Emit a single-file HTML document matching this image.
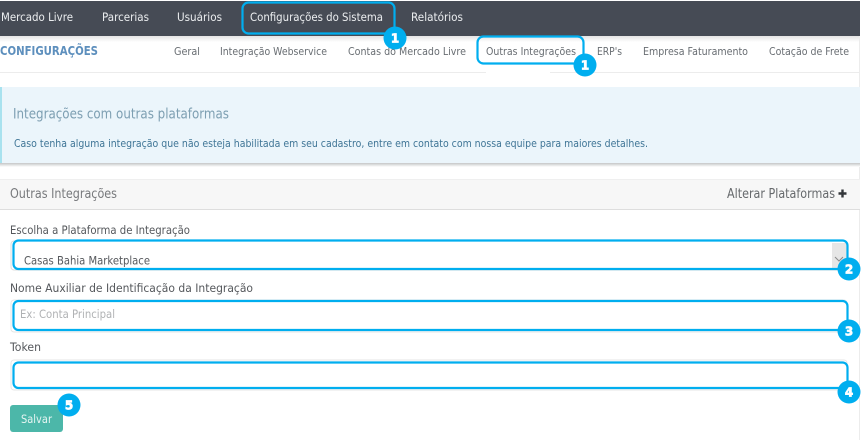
<!DOCTYPE html>
<html lang="pt-BR">
<head>
<meta charset="utf-8">
<title>Outras Integrações</title>
<style>
html,body{margin:0;padding:0;background:#fff;width:863px;height:440px;overflow:hidden}
svg{display:block;position:absolute;left:0;top:0;filter:blur(.3px)}
text{font-family:"DejaVu Sans","Liberation Sans",sans-serif;font-size:10px}
.hl{fill:none;stroke:#00aeef;stroke-width:2.2}
.bc{fill:#00aeef}
.bt{fill:#fff;stroke:#fff;stroke-width:.7;font-family:"DejaVu Sans",sans-serif;font-weight:700;font-size:12px;text-anchor:middle}
.n{font-size:11.5px}
.s{font-size:10.8px}
.f{font-size:11.5px}
</style>
</head>
<body>
<svg width="863" height="440" viewBox="0 0 863 440" xmlns="http://www.w3.org/2000/svg">
<defs>
<linearGradient id="ns" x1="0" y1="0" x2="0" y2="1"><stop offset="0" stop-color="#e4e4e4"/><stop offset="1" stop-color="#fff"/></linearGradient>
<linearGradient id="as" x1="0" y1="0" x2="0" y2="1"><stop offset="0" stop-color="#c4c6c7"/><stop offset="1" stop-color="#fff"/></linearGradient>
</defs>

<!-- top nav -->
<rect x="0" y="1" width="860" height="35" fill="#464b55"/>
<rect x="0" y="36" width="860" height="6" fill="url(#ns)"/>
<rect x="859" y="36" width="1" height="404" fill="#ececec"/>
<g fill="#eceef0">
<text class="n" x="1" y="21" textLength="72" lengthAdjust="spacingAndGlyphs">Mercado Livre</text>
<text class="n" x="102" y="21" textLength="47" lengthAdjust="spacingAndGlyphs">Parcerias</text>
<text class="n" x="177" y="21" textLength="45" lengthAdjust="spacingAndGlyphs">Usuários</text>
<text class="n" x="250" y="21" textLength="133" lengthAdjust="spacingAndGlyphs">Configurações do Sistema</text>
<text class="n" x="411" y="21" textLength="52" lengthAdjust="spacingAndGlyphs">Relatórios</text>
</g>

<!-- sub nav -->
<text x="0" y="55" textLength="98" lengthAdjust="spacingAndGlyphs" fill="#5d8fbd" style="font-weight:700;font-size:12px">CONFIGURAÇÕES</text>
<g fill="#686d72">
<text class="s" x="174" y="55" textLength="26" lengthAdjust="spacingAndGlyphs">Geral</text>
<text class="s" x="220" y="55" textLength="107" lengthAdjust="spacingAndGlyphs">Integração Webservice</text>
<text class="s" x="348" y="55" textLength="118" lengthAdjust="spacingAndGlyphs">Contas do Mercado Livre</text>
<text class="s" x="486" y="55" textLength="90" lengthAdjust="spacingAndGlyphs">Outras Integrações</text>
<text class="s" x="597" y="55" textLength="25" lengthAdjust="spacingAndGlyphs">ERP's</text>
<text class="s" x="643" y="55" textLength="105" lengthAdjust="spacingAndGlyphs">Empresa Faturamento</text>
<text class="s" x="769" y="55" textLength="80" lengthAdjust="spacingAndGlyphs">Cotação de Frete</text>
</g>
<rect x="0" y="72" width="486" height="1" fill="#ececec"/>
<rect x="486" y="72" width="64" height="1" fill="#fff"/>
<rect x="550" y="72" width="310" height="1" fill="#ececec"/>

<!-- alert -->
<rect x="0" y="163" width="860" height="4" fill="url(#as)"/>
<rect x="0" y="87" width="860" height="76" fill="#ebf5fb"/>
<rect x="0" y="87" width="2" height="76" fill="#a8e2ef"/>
<text x="13" y="118.5" textLength="216" lengthAdjust="spacingAndGlyphs" fill="#7d9fb2" style="font-size:14.5px">Integrações com outras plataformas</text>
<text x="14" y="147" textLength="634" lengthAdjust="spacingAndGlyphs" fill="#3f7596" style="font-size:11px">Caso tenha alguma integração que não esteja habilitada em seu cadastro, entre em contato com nossa equipe para maiores detalhes.</text>

<!-- panel -->
<rect x="0" y="179" width="860" height="30" fill="#f7f7f7"/>
<rect x="0" y="179" width="860" height="1" fill="#efefef"/>
<rect x="0" y="209" width="860" height="1" fill="#dedede"/>
<text x="10" y="198" textLength="107" lengthAdjust="spacingAndGlyphs" fill="#77797c" style="font-size:13px">Outras Integrações</text>
<text x="727" y="198" textLength="108" lengthAdjust="spacingAndGlyphs" fill="#66696c" style="font-size:13px">Alterar Plataformas</text>
<path d="M838.5 193.5h8M842.5 189.5v8" stroke="#33363a" stroke-width="2.4" fill="none"/>

<!-- form -->
<g fill="#55585c">
<text class="f" x="10" y="234" textLength="180" lengthAdjust="spacingAndGlyphs">Escolha a Plataforma de Integração</text>
<text class="f" x="10" y="292" textLength="243" lengthAdjust="spacingAndGlyphs">Nome Auxiliar de Identificação da Integração</text>
<text class="f" x="10" y="351" textLength="31" lengthAdjust="spacingAndGlyphs">Token</text>
</g>

<!-- select -->
<rect x="11" y="241" width="836" height="29" rx="3" fill="#fff" stroke="#dcdcdc"/>
<rect x="832" y="243" width="15" height="26" fill="#e6e6e6"/>
<path d="M835 257l4 4 4-4" fill="none" stroke="#8b8b8b" stroke-width="1"/>
<text class="f" x="24" y="264.5" textLength="126" lengthAdjust="spacingAndGlyphs" fill="#55585c">Casas Bahia Marketplace</text>

<!-- input nome -->
<rect x="11" y="300" width="836" height="32" rx="3" fill="#fff" stroke="#e6e6e6"/>
<text class="f" x="20" y="318" textLength="95" lengthAdjust="spacingAndGlyphs" fill="#b0b2b4">Ex: Conta Principal</text>

<!-- input token -->
<rect x="11" y="360" width="836" height="30" rx="3" fill="#fff" stroke="#e6e6e6"/>

<!-- button -->
<rect x="10" y="405" width="53" height="27" rx="3" fill="#4cb7a9"/>
<text class="f" x="21" y="423" textLength="31" lengthAdjust="spacingAndGlyphs" fill="#e6f5f2">Salvar</text>

<!-- highlights -->
<rect class="hl" x="242.5" y="2.5" width="152" height="31" rx="6"/>
<rect class="hl" x="477.5" y="36.5" width="106" height="27" rx="6"/>
<rect class="hl" x="13.5" y="240.5" width="834" height="28.5" rx="5"/>
<rect class="hl" x="13.5" y="301" width="834" height="29" rx="5"/>
<rect class="hl" x="13.5" y="362.5" width="834" height="25.5" rx="5"/>

<!-- badges -->
<circle class="bc" cx="395" cy="38" r="11.5"/><text class="bt" x="395" y="42.5">1</text>
<circle class="bc" cx="585" cy="65" r="11.5"/><text class="bt" x="585" y="69.5">1</text>
<circle class="bc" cx="849" cy="269" r="11.5"/><text class="bt" x="849" y="273.5">2</text>
<circle class="bc" cx="849" cy="331" r="11.5"/><text class="bt" x="849" y="335.5">3</text>
<circle class="bc" cx="849" cy="392" r="11.5"/><text class="bt" x="849" y="396.5">4</text>
<circle class="bc" cx="69" cy="405" r="11.5"/><text class="bt" x="69" y="409.5">5</text>
</svg>
</body>
</html>
